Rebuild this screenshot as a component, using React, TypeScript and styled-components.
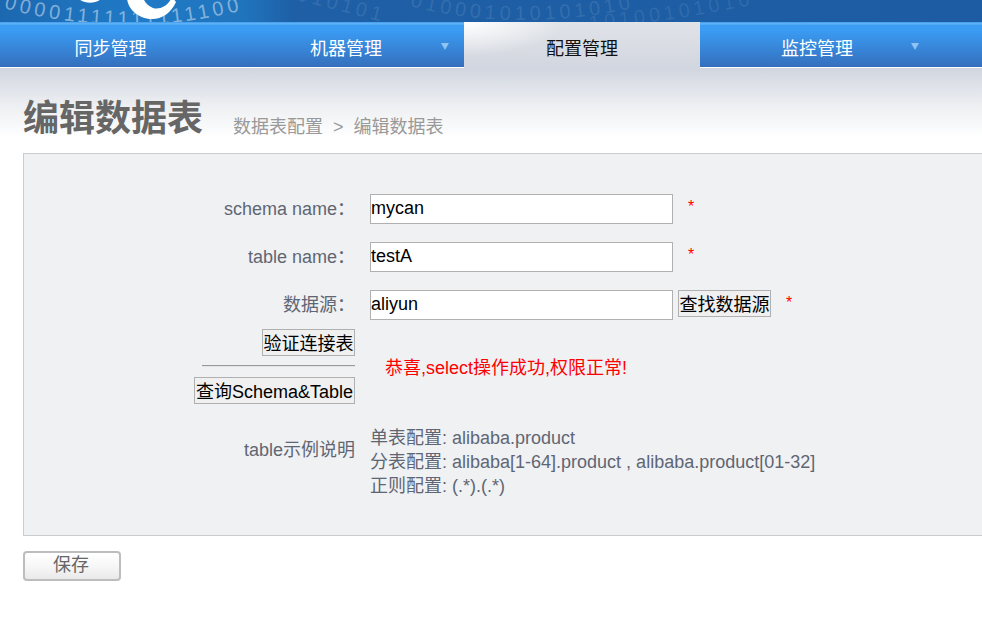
import React from "react";
import styled, { createGlobalStyle } from "styled-components";

const Global = createGlobalStyle`
  html, body { margin: 0; padding: 0; background: #fff; overflow: hidden; }
  body { font-family: "Liberation Sans", "Noto Sans CJK SC", sans-serif; font-size: 18px; color: #5f6673; }
`;

const Page = styled.div`
  width: 982px;
  height: 617px;
  overflow: hidden;
`;

const Banner = styled.header`
  height: 22px;
  background: linear-gradient(90deg, #1c68b0 0%, #207ac6 14%, #2074bc 25%, #1e5fa6 30%, #1d5ca2 100%);
  overflow: hidden;
`;

const BannerArt = styled.svg`
  display: block;
  width: 982px;
  height: 22px;
`;

const Nav = styled.nav`
  height: 46px;
  display: grid;
  grid-template-columns: 228px 236px 236px 234px 1fr;
  background: linear-gradient(180deg, #3a9cf3 0, #6db6f6 2px, #3a9cf3 3px, #3a9cf3 8px, #356fbd 45px, #fff 45px, #fff 46px);
`;

const NavItem = styled.a<{ $active?: boolean; $first?: boolean }>`
  position: relative;
  display: flex;
  align-items: center;
  justify-content: center;
  height: 46px;
  padding: 3px ${(p) => (p.$first ? "7px" : "0")} 0 0;
  box-sizing: border-box;
  font-size: 18px;
  color: ${(p) => (p.$active ? "#111" : "#fff")};
  background: ${(p) =>
    p.$active
      ? "radial-gradient(ellipse 100px 34px at 0 0, #ffffff 0%, rgba(255,255,255,0) 100%), linear-gradient(180deg, #e0e3e8 0%, #d2d6df 100%)"
      : "transparent"};
`;

const Caret = styled.i`
  position: absolute;
  right: 15px;
  top: 21px;
  width: 0;
  height: 0;
  border-left: 4px solid transparent;
  border-right: 4px solid transparent;
  border-top: 7px solid #8fc3f2;
`;

const Main = styled.main`
  height: 549px;
  background: linear-gradient(180deg, #d0d5df 0, #eceef1 36px, #ffffff 70px) no-repeat;
  background-size: 100% 72px;
`;

const TitleRow = styled.div`
  height: 85px;
  box-sizing: border-box;
  padding: 29px 0 0 23px;
  display: flex;
  align-items: flex-start;
`;

const Title = styled.h1`
  margin: 0;
  font-size: 36px;
  line-height: 44px;
  font-weight: 700;
  color: #666;
`;

const Crumbs = styled.div`
  margin: 17px 0 0 30px;
  font-size: 18px;
  line-height: 26px;
  color: #999;
  white-space: pre;
`;

const Panel = styled.section`
  margin: 0 -3px 0 23px;
  height: 383px;
  box-sizing: border-box;
  border: 1px solid #ccc;
  background: #f0f1f3;
  padding-top: 40px;
`;

const Row = styled.div`
  display: grid;
  grid-template-columns: 331px 1fr;
  column-gap: 15px;
  margin-bottom: 18px;
  align-items: start;
`;

const Label = styled.label`
  height: 30px;
  line-height: 30px;
  text-align: right;
  color: #5f6673;
  white-space: nowrap;
`;

const Field = styled.div`
  display: flex;
  align-items: flex-start;
`;

const TextInput = styled.input`
  width: 303px;
  height: 30px;
  box-sizing: border-box;
  border: 1px solid #b0b0b0;
  background: #fff;
  padding: 0 0 2px;
  margin: 0;
  font: 18px "Liberation Sans", "Noto Sans CJK SC", sans-serif;
  color: #000;
  outline: none;
`;

const Btn = styled.button<{ $w: number; $ml?: number }>`
  width: ${(p) => p.$w}px;
  height: 27px;
  box-sizing: border-box;
  border: 1px solid #b0b0b0;
  background: #f0f0f0;
  padding: 3px 0 0;
  margin: 0 0 0 ${(p) => p.$ml ?? 0}px;
  font: 18px/22px "Liberation Sans", "Noto Sans CJK SC", sans-serif;
  color: #000;
  white-space: nowrap;
`;

const Star = styled.span<{ $gap: number }>`
  margin-left: ${(p) => p.$gap}px;
  font-size: 16px;
  line-height: 26px;
  color: #f00;
`;

const CheckRow = styled.div`
  display: grid;
  grid-template-columns: 331px 1fr;
  column-gap: 30px;
  margin-top: -9px;
  align-items: center;
`;

const CheckActions = styled.div`
  display: flex;
  flex-direction: column;
  align-items: flex-end;
`;

const Rule = styled.hr`
  width: 153px;
  box-sizing: border-box;
  height: 2px;
  margin: 9px 0 10px;
  border: 0;
  border-top: 1px solid #9a9a9a;
  border-bottom: 1px solid #e4e4e4;
`;

const Message = styled.div`
  color: #f00;
  line-height: 26px;
  margin-top: 2px;
`;

const ExampleRow = styled.div`
  display: grid;
  grid-template-columns: 331px 1fr;
  column-gap: 15px;
  margin-top: 22px;
  align-items: start;
`;

const ExampleLabel = styled.div`
  margin-top: 12px;
  line-height: 24px;
  text-align: right;
  color: #5f6673;
`;

const ExampleText = styled.div`
  line-height: 24px;
  color: #5f6673;
  white-space: nowrap;
`;

const SaveButton = styled.button`
  display: block;
  margin: 15px 0 0 23px;
  width: 98px;
  height: 30px;
  box-sizing: border-box;
  border: 2px solid #bdbdbd;
  border-radius: 4px;
  background: linear-gradient(180deg, #ffffff 0%, #f7f7f7 50%, #e9e9e9 100%);
  font: 18px/20px "Liberation Sans", "Noto Sans CJK SC", sans-serif;
  color: #666;
  padding: 0 2px 2px 0;
`;

const Digits = styled.text<{ $o: number }>`
  font-family: "Liberation Sans", sans-serif;
  font-size: 20px;
  letter-spacing: 4px;
  fill: #fff;
  fill-opacity: ${(p) => p.$o};
`;

export default function App() {
  return (
    <Page>
      <Global />
      <Banner>
        <BannerArt viewBox="0 0 982 22">
          <defs>
            <path id="arcMain" d="M 4 8 C 30 16, 70 23, 122 25 C 170 26, 215 18, 275 2" fill="none" />
            <path id="arcUpper" d="M 296 0 C 330 8, 365 18, 410 28" fill="none" />
            <path id="arcMiddle" d="M 410 6 C 440 14, 475 20, 520 20 C 570 20, 620 14, 680 -4" fill="none" />
            <path id="arcLower" d="M 590 30 C 640 24, 720 14, 790 -4" fill="none" />
          </defs>
          <Digits $o={0.45}>
            <textPath href="#arcMain">00001111111111100</textPath>
          </Digits>
          <Digits $o={0.11}>
            <textPath href="#arcUpper">010101</textPath>
          </Digits>
          <Digits $o={0.11}>
            <textPath href="#arcMiddle">010001010101010</textPath>
          </Digits>
          <Digits $o={0.09}>
            <textPath href="#arcLower">10100101010</textPath>
          </Digits>
          <path d="M77 -3 C 82 4, 97 5, 103 -3 Z" fill="#fff" />
          <path
            d="M127 -3 C 127 10, 140 19, 152 19 C 162 19, 171 13, 176 2 L 172 -3 C 168 6, 160 10, 153 8 C 148 6, 144 2, 143 -3 Z"
            fill="#fff"
          />
        </BannerArt>
      </Banner>
      <Nav>
        <NavItem $first>同步管理</NavItem>
        <NavItem>
          机器管理
          <Caret />
        </NavItem>
        <NavItem $active>配置管理</NavItem>
        <NavItem>
          监控管理
          <Caret />
        </NavItem>
      </Nav>
      <Main>
        <TitleRow>
          <Title>编辑数据表</Title>
          <Crumbs>数据表配置  &gt;  编辑数据表</Crumbs>
        </TitleRow>
        <Panel>
          <Row>
            <Label>schema name：</Label>
            <Field>
              <TextInput defaultValue="mycan" />
              <Star $gap={15}>*</Star>
            </Field>
          </Row>
          <Row>
            <Label>table name：</Label>
            <Field>
              <TextInput defaultValue="testA" />
              <Star $gap={15}>*</Star>
            </Field>
          </Row>
          <Row>
            <Label>数据源：</Label>
            <Field>
              <TextInput defaultValue="aliyun" />
              <Btn $w={93} $ml={5}>查找数据源</Btn>
              <Star $gap={15}>*</Star>
            </Field>
          </Row>
          <CheckRow>
            <CheckActions>
              <Btn $w={93}>验证连接表</Btn>
              <Rule />
              <Btn $w={161}>查询Schema&amp;Table</Btn>
            </CheckActions>
            <Message>恭喜,select操作成功,权限正常!</Message>
          </CheckRow>
          <ExampleRow>
            <ExampleLabel>table示例说明</ExampleLabel>
            <ExampleText>
              单表配置: alibaba.product
              <br />
              分表配置: alibaba[1-64].product , alibaba.product[01-32]
              <br />
              正则配置: (.*).(.*)
            </ExampleText>
          </ExampleRow>
        </Panel>
        <SaveButton>保存</SaveButton>
      </Main>
    </Page>
  );
}
